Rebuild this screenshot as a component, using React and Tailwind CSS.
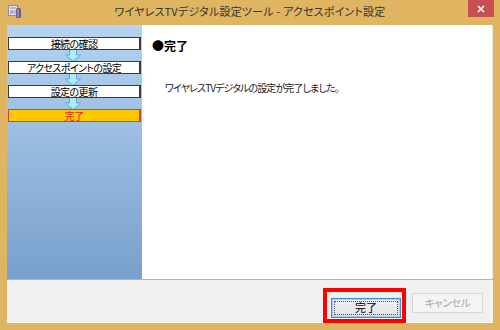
import React from 'react'

const jp = { fontFamily: '"Noto Sans CJK JP", "Noto Sans", sans-serif' }

const steps = [
  { label: '接続の確認' },
  { label: 'アクセスポイントの設定' },
  { label: '設定の更新' },
  { label: '完了', current: true },
]

function AppIcon() {
  return (
    <svg width="14" height="13" viewBox="0 0 14 13">
      <rect x="0.5" y="0.5" width="9" height="10" fill="#e8e8ec" stroke="#8a8a96" />
      <rect x="2" y="2" width="6" height="2" fill="#b0b8d0" />
      <rect x="2" y="5" width="3" height="4" fill="#c8a0c8" />
      <rect x="5" y="5" width="3" height="4" fill="#a8c8e0" />
      <rect x="8" y="3" width="5" height="10" rx="1.5" fill="#6c5a8c" />
      <rect x="9" y="4" width="2" height="8" fill="#9486b0" />
    </svg>
  )
}

function StepArrow() {
  return (
    <div className="flex justify-center h-[11px] pr-[3px]">
      <svg width="16" height="13" viewBox="0 0 16 13" className="block -mt-[1px]">
        <path d="M4.5 0.5 H11.5 V6 H15.5 L8 12.5 L0.5 6 H4.5 Z" fill="#a4f0fc" stroke="#6f9fd6" strokeWidth="1" />
      </svg>
    </div>
  )
}

function StepBox({ step }) {
  const box = step.current
    ? 'bg-[#ffc800] border-[#e03c3c] text-[#e01e1e]'
    : 'bg-white border-[#3a3a3a] text-black'
  return (
    <div
      className={`relative z-10 h-[13px] border border-r-2 flex items-center justify-center text-[10px] tracking-[-0.6px] leading-none [font-feature-settings:'palt'] ${box}`}
      style={jp}
    >
      {step.label}
    </div>
  )
}

export default function App() {
  return (
    <div className="w-[500px] h-[330px] bg-[#dfb561] flex flex-col select-none" style={jp}>
      {/* title bar */}
      <div className="h-[25px] grid grid-cols-[1fr_auto_1fr]">
        <div className="pl-[8px] pt-[5px]">
          <AppIcon />
        </div>
        <div className="flex items-center text-[11px] text-[#333] tracking-[0.2px] [font-feature-settings:'palt'] pb-[2px]">
          ワイヤレスTVデジタル設定ツール - アクセスポイント設定
        </div>
        <div className="flex justify-end">
          <div className="w-[26px] h-[17px] mr-[6px] bg-[#c75050] flex items-center justify-center">
            <svg width="8" height="8" viewBox="0 0 8 8">
              <path d="M1 1 L7 7 M7 1 L1 7" stroke="#fff" strokeWidth="1.6" />
            </svg>
          </div>
        </div>
      </div>

      {/* client */}
      <div className="mx-[7px] mb-[7px] flex-1 flex flex-col">
        <div className="h-[254px] flex">
          <div className="w-[135px] bg-gradient-to-b from-[#b6d3f2] to-[#78a0cc] pt-[12px] pl-[1px] pr-[1px]">
            {steps.map((s, i) => (
              <div key={i}>
                <StepBox step={s} />
                {i < steps.length - 1 && <StepArrow />}
              </div>
            ))}
          </div>
          <div className="flex-1 bg-white pl-[10px] pt-[13px] border-r border-[#e4e4e4]">
            <div className="text-[12px] font-bold text-black leading-[16px] [font-feature-settings:'palt']">●完了</div>
            <div className="mt-[27px] ml-[13px] text-[10px] tracking-[-0.9px] text-[#222] leading-[14px] [font-feature-settings:'palt']">
              ワイヤレスTVデジタルの設定が完了しました。
            </div>
          </div>
        </div>

        <div className="h-[44px] bg-[#f0f0f0] border-t border-[#b4b4b4] border-b border-b-[#fafafa] flex justify-end items-start pt-[13px] pr-[10px] gap-[11px]">
          <div className="relative">
            <button className="w-[70px] h-[20px] border border-[#3c8ed8] bg-gradient-to-b from-[#f2f2f2] to-[#e2e2e2] p-[2px] shadow-[inset_0_0_0_1px_#9cd0f8]">
              <div className="h-full border border-dotted border-[#505050] flex items-center justify-center text-[11px] leading-none text-black">
                完了
              </div>
            </button>
            <div className="absolute -left-[8px] -right-[5px] -top-[5px] -bottom-[5px] border-4 border-[#ff0000] pointer-events-none" />
          </div>
          <button className="w-[71px] h-[20px] border border-[#d6d6d6] bg-[#f4f4f4] flex items-center justify-center text-[10.5px] tracking-[-0.5px] leading-none text-[#a8a8a8] [font-feature-settings:'palt']">
            キャンセル
          </button>
        </div>
      </div>
    </div>
  )
}
